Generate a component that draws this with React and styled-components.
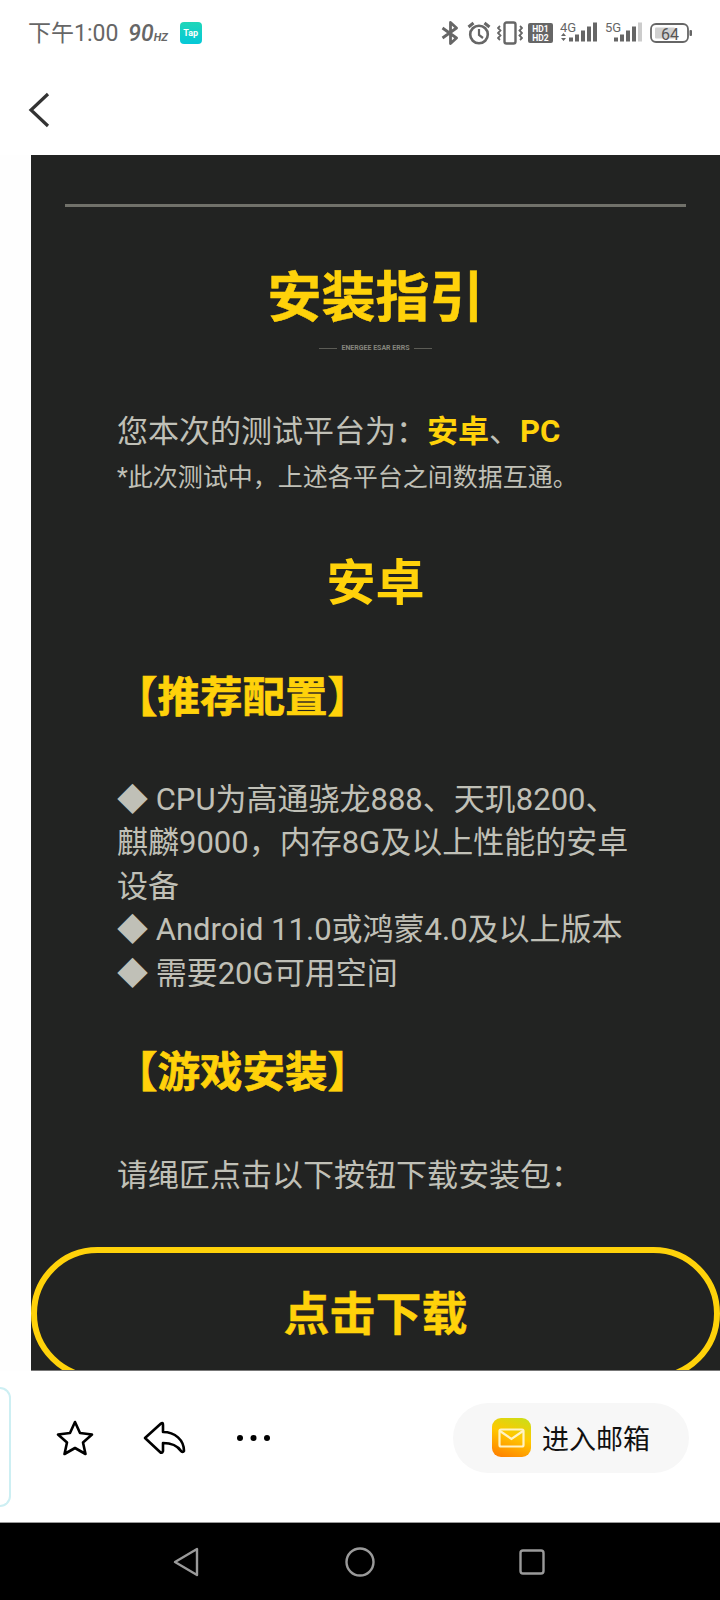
import React from 'react'
import styled, { createGlobalStyle } from 'styled-components'

const GlobalStyle = createGlobalStyle`
  html, body { margin: 0; padding: 0; background: #fff; }
  * { box-sizing: border-box; }
`

const FONT = `Roboto, "Noto Sans CJK SC", sans-serif`
const YELLOW = '#ffd20a'
const GREY_TEXT = '#c0c0b7'

const Page = styled.div`
  width: 720px;
  height: 1600px;
  display: flex;
  flex-direction: column;
  overflow: hidden;
  background: #fff;
  font-family: ${FONT};
`

const StatusBar = styled.div`
  height: 66px;
  flex: none;
  display: flex;
  align-items: center;
  justify-content: space-between;
  padding: 0 28px;
  color: #666;
`

const StatusLeft = styled.div`
  display: flex;
  align-items: center;
`

const Clock = styled.span`
  font-size: 23px;
  margin-bottom: 4px;
`

const Hz = styled.span`
  margin-left: 10px;
  font-size: 23px;
  font-style: italic;
  font-weight: 500;
  & small { font-size: 11px; font-weight: 700; }
`

const TapBadge = styled.span`
  margin-left: 12px;
  width: 22px;
  height: 22px;
  border-radius: 4px;
  background: linear-gradient(180deg, #1fd6b8, #05c8d8);
  color: #fff;
  font-size: 9px;
  font-weight: 700;
  display: flex;
  align-items: center;
  justify-content: center;
`

const StatusRight = styled.div`
  display: flex;
  align-items: center;
  & > svg { display: block; flex: none; }
`

const Header = styled.div`
  height: 89px;
  flex: none;
  display: flex;
  align-items: center;
  padding: 0 0 2px 26px;
`

const Body = styled.div`
  flex: 1;
  min-height: 0;
  padding-left: 31px;
  background: #fefefe;
`

const Panel = styled.div`
  height: 100%;
  overflow: hidden;
  background: #222322;
  padding-top: 49px;
  border-bottom: 1px solid #777;
`

const Rule = styled.div`
  height: 3px;
  margin: 0 34px;
  background: #71716a;
`

const Title = styled.h1`
  margin: 56px 0 0;
  text-align: center;
  font-size: 54px;
  line-height: 72px;
  font-weight: 700;
  -webkit-text-stroke: 0.5px ${YELLOW};
  color: ${YELLOW};
`

const Tagline = styled.div`
  margin-top: 9px;
  display: flex;
  align-items: center;
  justify-content: center;
  gap: 4px;
  color: #85857d;
  font-size: 7px;
  line-height: 8px;
  font-weight: 700;
  &::before, &::after {
    content: '';
    width: 18px;
    height: 1px;
    background: #5c5c56;
  }
`

const Text = styled.p`
  margin: ${p => p.$top || 0}px 0 0;
  padding: 0 88px 0 86px;
  font-size: ${p => p.$size || 31}px;
  line-height: ${p => p.$line || 43.5}px;
  color: ${GREY_TEXT};
  & b { color: ${YELLOW}; font-weight: 700; }
`

const SubTitle = styled.h2`
  margin: 51px 0 0;
  text-align: center;
  font-size: 49px;
  line-height: 66px;
  font-weight: 700;
  color: ${YELLOW};
`

const SectionTitle = styled.h3`
  margin: ${p => p.$top}px 0 0;
  padding-left: 84px;
  font-size: 42.5px;
  line-height: 58px;
  font-weight: 700;
  -webkit-text-stroke: 0.7px ${YELLOW};
  color: ${YELLOW};
`

const DownloadButton = styled.div`
  margin-top: 49px;
  height: 133px;
  flex: none;
  border: 6px solid ${YELLOW};
  border-radius: 67px;
  padding-bottom: 6px;
  display: flex;
  align-items: center;
  justify-content: center;
  font-size: 46px;
  font-weight: 700;
  -webkit-text-stroke: 0.4px ${YELLOW};
  color: ${YELLOW};
`

const Toolbar = styled.div`
  height: 152px;
  flex: none;
  display: flex;
  align-items: center;
  padding-bottom: 18px;
  background: #fff;
  border-bottom: 1px solid #9a9a9a;
`

const PeekCard = styled.div`
  width: 11px;
  height: 120px;
  flex: none;
  margin: 18px 45px 0 0;
  border: 2px solid #cdeff3;
  border-left: none;
  border-radius: 0 12px 12px 0;
`

const ToolIcon = styled.svg`
  display: block;
  flex: none;
  margin-right: ${p => p.$gap}px;
`

const MailPill = styled.div`
  margin-left: auto;
  margin-right: 31px;
  width: 236px;
  height: 70px;
  border-radius: 35px;
  background: #f7f7f7;
  display: flex;
  align-items: center;
  padding-left: 39px;
  gap: 11px;
  font-size: 27px;
  color: #111;
`

const MailLogo = styled.span`
  width: 39px;
  height: 39px;
  flex: none;
  border-radius: 9px;
  background: linear-gradient(200deg, #c6e01a 0%, #ffc800 45%, #ff7a00 100%);
  display: flex;
  align-items: center;
  justify-content: center;
`

const NavBar = styled.div`
  height: 77px;
  flex: none;
  background: #000;
  display: flex;
  align-items: center;
  padding: 0 0 0 173px;
  & svg { display: block; flex: none; }
`

const NavGap = styled.span`
  width: ${p => p.$w}px;
  flex: none;
`

function Bluetooth() {
  return (
    <svg width="18" height="24" viewBox="0 0 18 24" fill="none" stroke="#666" strokeWidth="2.800" strokeLinejoin="round">
      <path d="M1.500 7l14 10-6 5.500V1.500l6 5.500-14 10" />
    </svg>
  )
}

function Alarm() {
  return (
    <svg width="24" height="24" viewBox="0 0 24 24" fill="none" stroke="#666" strokeWidth="2.600" style={{ marginLeft: 8 }}>
      <circle cx="12" cy="13.500" r="8.800" />
      <path d="M12 8v6l4 3" strokeWidth="2.200" />
      <path d="M1.500 6l5-4M22.500 6l-5-4" strokeWidth="3" />
    </svg>
  )
}

function Vibrate() {
  return (
    <svg width="26" height="24" viewBox="0 0 26 24" fill="none" stroke="#666" strokeWidth="1.800" style={{ marginLeft: 6 }}>
      <rect x="7.500" y="1.500" width="11" height="21" rx="2" strokeWidth="2.400" />
      <path d="M3 5L1 7l2.500 2.500L1 12l2.500 2.500L1 17l2 2M23 5l2 2-2.500 2.500L25 12l-2.500 2.500L25 17l-2 2" />
    </svg>
  )
}

function HdBadge() {
  return (
    <svg width="25" height="20" viewBox="0 0 25 20" style={{ marginLeft: 5 }}>
      <rect width="25" height="20" rx="2" fill="#666" />
      <text x="12.500" y="8.500" textAnchor="middle" fontSize="8.500" fontWeight="700" fontFamily="Roboto, sans-serif" fill="#fff">HD1</text>
      <text x="12.500" y="18" textAnchor="middle" fontSize="8.500" fontWeight="700" fontFamily="Roboto, sans-serif" fill="#fff">HD2</text>
    </svg>
  )
}

function Signal({ label, arrows, dim }) {
  const heights = [4, 7, 11, 15, 19]
  return (
    <svg width="38" height="24" viewBox="0 0 38 24" style={{ marginLeft: 7 }}>
      <text x="0" y="10.500" fontSize="13" fontFamily="Roboto, sans-serif" fill="#666">{label}</text>
      {arrows && <path d="M1 15l2.500-3 2.500 3zM1 17l2.500 3 2.500-3z" fill="#666" />}
      {heights.map((h, i) => (
        <rect key={i} x={9 + i * 6} y={20.500 - h} width="4" height={h} fill={dim && i === 4 ? '#ccc' : '#666'} />
      ))}
    </svg>
  )
}

function Battery() {
  return (
    <svg width="42" height="20" viewBox="0 0 42 20" style={{ marginLeft: 7 }}>
      <rect x="1" y="1" width="37" height="18" rx="5" fill="none" stroke="#666" strokeWidth="1.800" />
      <rect x="5" y="4.500" width="20" height="11" rx="1" fill="#d0d0d0" />
      <text x="20" y="16.500" textAnchor="middle" fontSize="16" fontFamily="Roboto, sans-serif" fill="#555">64</text>
      <rect x="39.500" y="7" width="2.500" height="6" rx="1" fill="#666" />
    </svg>
  )
}

function App() {
  return (
    <Page>
      <GlobalStyle />
      <StatusBar>
        <StatusLeft>
          <Clock>下午1:00</Clock>
          <Hz>90<small>HZ</small></Hz>
          <TapBadge>Tap</TapBadge>
        </StatusLeft>
        <StatusRight>
          <Bluetooth />
          <Alarm />
          <Vibrate />
          <HdBadge />
          <Signal label="4G" arrows />
          <Signal label="5G" dim />
          <Battery />
        </StatusRight>
      </StatusBar>

      <Header>
        <svg width="26" height="38" viewBox="0 0 26 38" fill="none" stroke="#333" strokeWidth="3.200">
          <path d="M22 3L5 19l17 16" />
        </svg>
      </Header>

      <Body>
        <Panel>
          <Rule />
          <Title>安装指引</Title>
          <Tagline>ENERGEE ESAR ERRS</Tagline>
          <Text $top={58}>您本次的测试平台为：<b>安卓</b>、<b>PC</b></Text>
          <Text $size={25} $line={44} $top={2}>*此次测试中，上述各平台之间数据互通。</Text>
          <SubTitle>安卓</SubTitle>
          <SectionTitle $top={52}>【推荐配置】</SectionTitle>
          <Text $top={51}>
            ◆ CPU为高通骁龙888、天玑8200、麒麟9000，内存8G及以上性能的安卓设备<br />
            ◆ Android 11.0或鸿蒙4.0及以上版本<br />
            ◆ 需要20G可用空间
          </Text>
          <SectionTitle $top={49}>【游戏安装】</SectionTitle>
          <Text $top={52}>请绳匠点击以下按钮下载安装包：</Text>
          <DownloadButton>点击下载</DownloadButton>
        </Panel>
      </Body>

      <Toolbar>
        <PeekCard />
        <ToolIcon $gap={49} width="38" height="36" viewBox="0 0 38 36" fill="none" stroke="#000" strokeWidth="2.600" strokeLinejoin="round">
          <path d="M19 2l5 11 12 1.500-9 8 2.500 11.500L19 28l-10.500 6L11 22.500l-9-8L14 13z" />
        </ToolIcon>
        <ToolIcon $gap={51} width="43" height="36" viewBox="0 0 43 36" fill="none" stroke="#000" strokeWidth="2.600" strokeLinejoin="round">
          <path d="M2 18L18 3.500Q20 2 20 5V12C32 12 41 20 41 31Q40 33 38 31C34 25 27 23 20 23V31Q19 34 17 32z" />
        </ToolIcon>
        <ToolIcon $gap={0} width="34" height="8" viewBox="0 0 34 8" fill="#000">
          <circle cx="3" cy="4" r="3" />
          <circle cx="16.500" cy="4" r="3" />
          <circle cx="30" cy="4" r="3" />
        </ToolIcon>
        <MailPill>
          <MailLogo>
            <svg width="27" height="20" viewBox="0 0 27 20" fill="none" stroke="#fff3c4" strokeWidth="2.200">
              <rect x="1.500" y="1.500" width="24" height="17" rx="1.500" />
              <path d="M2 3l11.500 8L25 3" />
            </svg>
          </MailLogo>
          进入邮箱
        </MailPill>
      </Toolbar>

      <NavBar>
        <svg width="26" height="30" viewBox="0 0 26 30" fill="none" stroke="#9a9a9a" strokeWidth="2.400" strokeLinejoin="round">
          <path d="M2 15L24 2v26z" />
        </svg>
        <NavGap $w={146} />
        <svg width="30" height="30" viewBox="0 0 30 30" fill="none" stroke="#9a9a9a" strokeWidth="2.400">
          <circle cx="15" cy="15" r="13.500" />
        </svg>
        <NavGap $w={144} />
        <svg width="26" height="26" viewBox="0 0 26 26" fill="none" stroke="#9a9a9a" strokeWidth="2.400">
          <rect x="1.500" y="1.500" width="23" height="23" rx="2.500" />
        </svg>
      </NavBar>
    </Page>
  )
}

export default App
